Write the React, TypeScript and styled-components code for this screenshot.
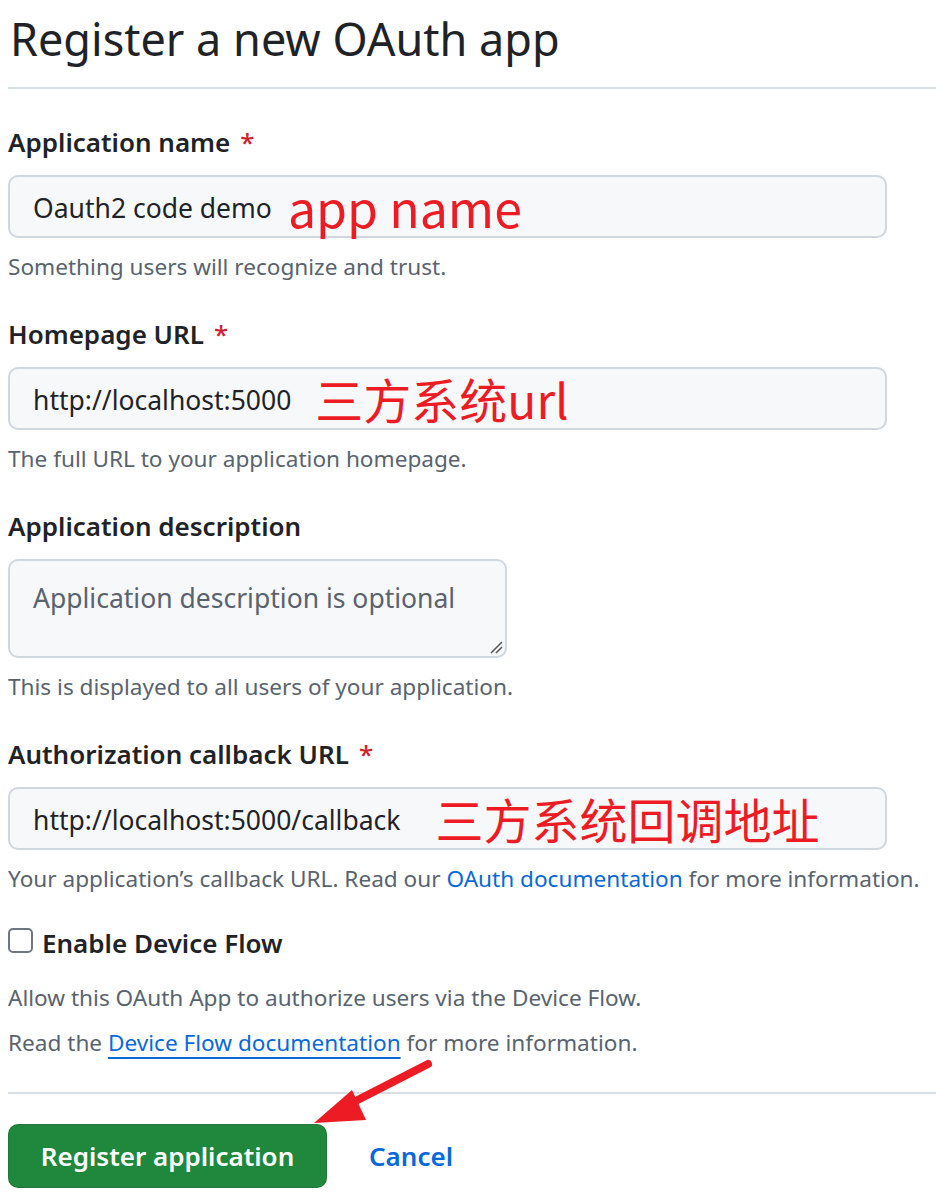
import React from "react";
import styled, { createGlobalStyle } from "styled-components";

const GlobalStyle = createGlobalStyle`
  html, body { margin: 0; padding: 0; background: #ffffff; }
  body { font-family: "Noto Sans", "Open Sans", "Liberation Sans", sans-serif; color: #1f2328; }
  * { box-sizing: border-box; }
`;

const Page = styled.div`
  position: relative;
  width: 936px;
  height: 1204px;
  overflow: hidden;
  padding-left: 8px;
`;

const Heading = styled.h1`
  margin: 0;
  padding: 4px 0 13px 2px;
  font-size: 45px;
  line-height: 70px;
  font-weight: 400;
  color: #1f2328;
  border-bottom: 2px solid #d8dee4;
`;

const Form = styled.form`
  display: flex;
  flex-direction: column;
  padding-top: 36px;
`;

const Field = styled.div<{ $gap?: number }>`
  display: flex;
  flex-direction: column;
  margin-bottom: ${(p) => p.$gap ?? 35}px;
`;

const Label = styled.label`
  font-size: 26px;
  line-height: 35px;
  font-weight: 600;
  color: #1f2328;
  margin-bottom: 15px;
  white-space: nowrap;
`;

const Required = styled.span`
  color: #cf222e;
  margin-left: 10px;
  font-weight: 500;
`;

const InputBox = styled.div<{ $width: number; $height: number }>`
  position: relative;
  display: flex;
  align-items: ${(p) => (p.$height > 70 ? "flex-start" : "center")};
  width: ${(p) => p.$width}px;
  height: ${(p) => p.$height}px;
  padding: ${(p) => (p.$height > 70 ? "19px 23px" : "2px 23px 0")};
  background: #f6f8fa;
  border: 2px solid #d0d7de;
  border-radius: 10px;
  font-size: 26.5px;
  color: #1f2328;
  white-space: nowrap;
`;

const Placeholder = styled.span`
  color: #59636e;
`;

const Annotation = styled.span<{ $offset: number; $size: number }>`
  margin-left: ${(p) => p.$offset}px;
  color: #ed1c24;
  font-size: ${(p) => p.$size}px;
  font-family: "Noto Sans CJK SC", "Noto Sans", sans-serif;
  line-height: 1;
  position: relative;
  top: -2px;
`;

const Resize = styled.svg`
  position: absolute;
  right: 2px;
  bottom: 2px;
`;

const Note = styled.p`
  margin: 13px 0 0;
  font-size: 22.6px;
  line-height: 31px;
  color: #59636e;
  white-space: nowrap;
`;

const Link = styled.a<{ $underline?: boolean }>`
  color: #0969da;
  text-decoration: ${(p) => (p.$underline ? "underline" : "none")};
  text-underline-offset: 6px;
  text-decoration-thickness: 2px;
`;

const CheckRow = styled.div`
  display: flex;
  align-items: center;
  gap: 9px;
  height: 35px;
  margin-bottom: 15px;
`;

const Checkbox = styled.span`
  width: 25px;
  height: 25px;
  border: 2px solid #6e7781;
  border-radius: 5px;
  background: #fff;
  flex: none;
  position: relative;
  top: -2px;
`;

const CheckLabel = styled.span`
  font-size: 26px;
  font-weight: 600;
  color: #1f2328;
`;

const DeviceNote = styled.p`
  margin: 0;
  font-size: 22.6px;
  line-height: 45px;
  color: #59636e;
  white-space: nowrap;
`;

const Divider = styled.hr`
  margin: 27px 0 0;
  border: none;
  border-top: 2px solid #d8dee4;
`;

const Actions = styled.div`
  display: flex;
  align-items: center;
  gap: 42px;
  margin-top: 30px;
`;

const PrimaryButton = styled.button`
  width: 319px;
  height: 64px;
  background: #1f883d;
  color: #ffffff;
  border: 1px solid rgba(31, 35, 40, 0.15);
  border-radius: 10px;
  font-family: inherit;
  font-size: 26px;
  font-weight: 600;
  padding: 0;
`;

const CancelLink = styled.a`
  color: #0969da;
  font-size: 26px;
  font-weight: 600;
  text-decoration: none;
`;

const Arrow = styled.svg`
  position: absolute;
  left: 300px;
  top: 1050px;
`;

export default function App() {
  return (
    <Page>
      <GlobalStyle />
      <Heading>Register a new OAuth app</Heading>
      <Form>
        <Field>
          <Label>
            Application name<Required>*</Required>
          </Label>
          <InputBox $width={879} $height={63}>
            Oauth2 code demo
            <Annotation $offset={16} $size={50}>app name</Annotation>
          </InputBox>
          <Note>Something users will recognize and trust.</Note>
        </Field>
        <Field>
          <Label>
            Homepage URL<Required>*</Required>
          </Label>
          <InputBox $width={879} $height={63}>
            http://localhost:5000
            <Annotation $offset={24} $size={48}>三方系统url</Annotation>
          </InputBox>
          <Note>The full URL to your application homepage.</Note>
        </Field>
        <Field>
          <Label>Application description</Label>
          <InputBox $width={499} $height={99}>
            <Placeholder>Application description is optional</Placeholder>
            <Resize width="14" height="14" viewBox="0 0 14 14">
              <path d="M2 13 L13 2 M7 13 L13 7" stroke="#555" strokeWidth="1.5" />
            </Resize>
          </InputBox>
          <Note>This is displayed to all users of your application.</Note>
        </Field>
        <Field $gap={31}>
          <Label>
            Authorization callback URL<Required>*</Required>
          </Label>
          <InputBox $width={879} $height={63}>
            http://localhost:5000/callback
            <Annotation $offset={35} $size={48}>三方系统回调地址</Annotation>
          </InputBox>
          <Note>
            Your application’s callback URL. Read our <Link href="#">OAuth documentation</Link> for more
            information.
          </Note>
        </Field>
        <CheckRow>
          <Checkbox />
          <CheckLabel>Enable Device Flow</CheckLabel>
        </CheckRow>
        <DeviceNote>Allow this OAuth App to authorize users via the Device Flow.</DeviceNote>
        <DeviceNote>
          Read the <Link href="#" $underline>Device Flow documentation</Link> for more information.
        </DeviceNote>
        <Divider />
        <Actions>
          <PrimaryButton type="button">Register application</PrimaryButton>
          <CancelLink href="#">Cancel</CancelLink>
        </Actions>
      </Form>
      <Arrow width="150" height="80" viewBox="0 0 150 80">
        <line x1="128" y1="14" x2="42" y2="58" stroke="#ed1c24" strokeWidth="8" strokeLinecap="round" />
        <polygon points="14,73 52,40 66,70" fill="#ed1c24" />
      </Arrow>
    </Page>
  );
}
